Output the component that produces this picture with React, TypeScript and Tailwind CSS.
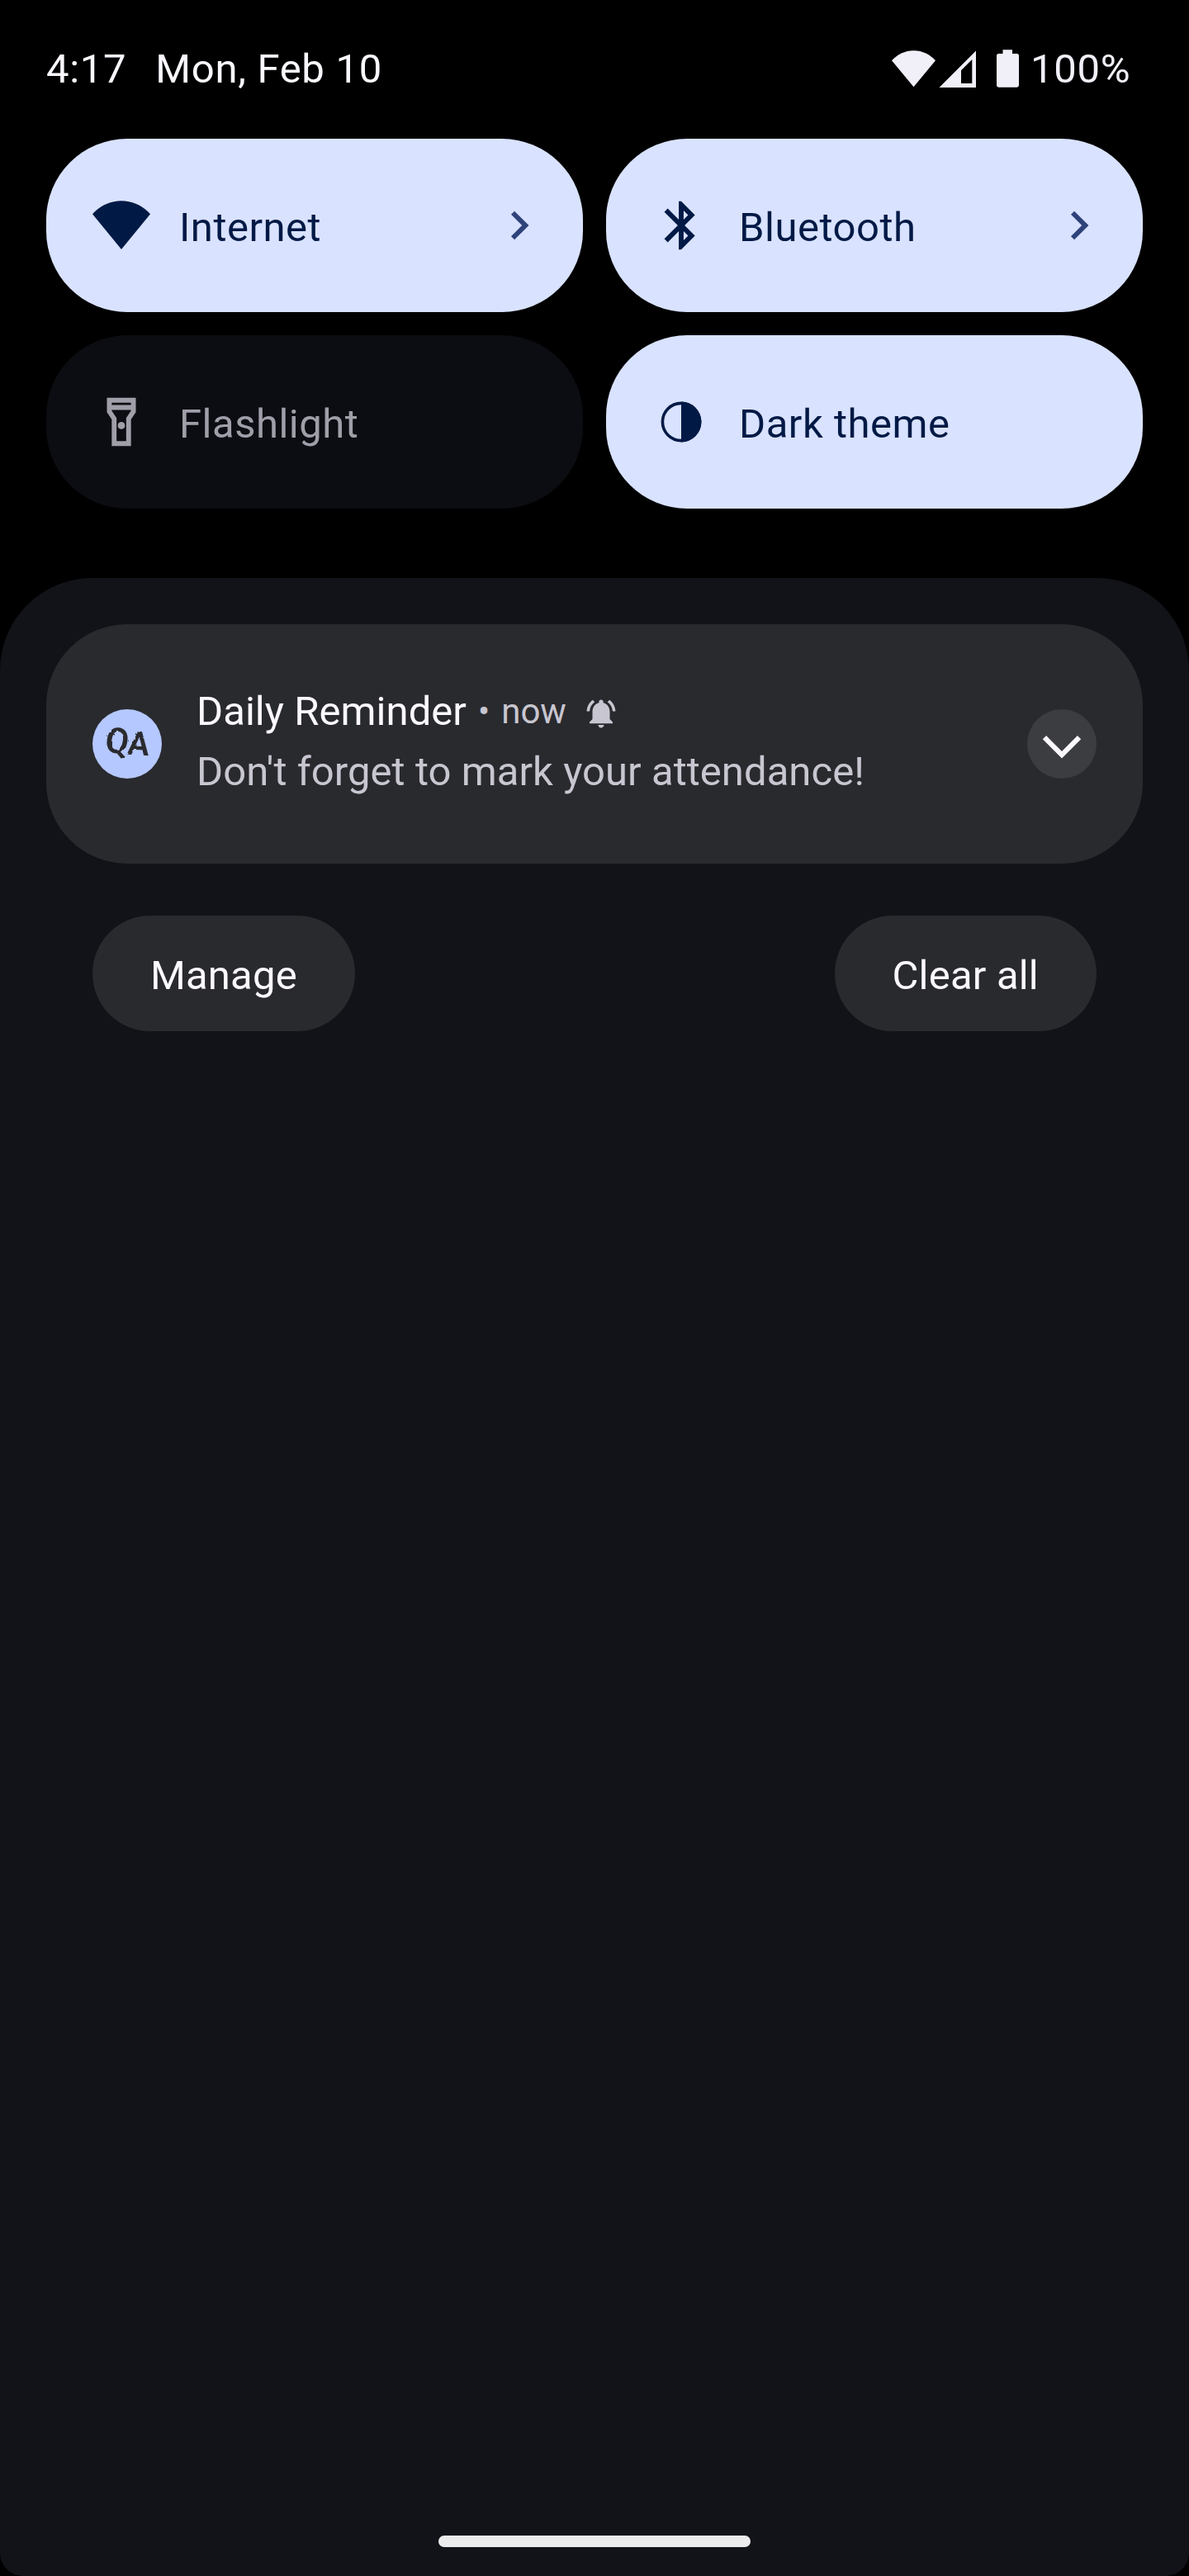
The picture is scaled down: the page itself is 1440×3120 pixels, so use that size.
import type { ReactNode } from "react";

type TileProps = {
  label: string;
  icon: ReactNode;
  active?: boolean;
  expandable?: boolean;
};

function WifiStatusIcon() {
  return (
    <svg className="mt-[5px] h-[46px] w-[53px]" viewBox="0 0 53 46" fill="currentColor">
      <path d="M26.5 45.3 0 13.3C6.5 6 16 1.2 26.5 1.2S46.500 6 53 13.300z" />
    </svg>
  );
}

function SignalStatusIcon() {
  return (
    <svg className="mt-[5px] ml-1 h-[46px] w-[46px]" viewBox="0 0 46 46" fill="currentColor" fillRule="evenodd">
      <path d="M.5 46 45 1.500V46zM27 25.300V41h13.300V12z" />
    </svg>
  );
}

function BatteryStatusIcon() {
  return (
    <svg className="mt-[5px] ml-6 h-[46px] w-[27px]" viewBox="0 0 27 46" fill="currentColor">
      <path d="M7.500.300h11.500v4.700H24.500A2.500 2.500 0 0 1 27 7.500V43.300A2.500 2.500 0 0 1 24.500 45.700H2.500A2.500 2.500 0 0 1 0 43.300V7.500A2.500 2.500 0 0 1 2.500 5h5z" />
    </svg>
  );
}

function InternetIcon() {
  return (
    <svg className="size-[70px]" viewBox="0 0 70 70" fill="currentColor">
      <path d="M35 64 0 21.300C8.500 11.500 21 5.300 35 5.300s26.500 6.200 35 16z" />
    </svg>
  );
}

function BluetoothIcon() {
  return (
    <svg className="size-[70px]" viewBox="0 0 24 24" fill="currentColor">
      <path d="M17.71 7.71 12 2h-1v7.590L6.410 5 5 6.410 10.590 12 5 17.590 6.410 19 11 14.410V22h1l5.710-5.710-4.300-4.290 4.300-4.290zM13 5.830l1.880 1.880L13 9.590V5.830zm1.880 10.460L13 18.170v-3.760l1.880 1.880z" />
    </svg>
  );
}

function FlashlightIcon() {
  return (
    <svg className="size-[70px]" viewBox="0 0 24 24" fill="currentColor">
      <path d="M18 2H6v6l2 3v11h8V11l2-3V2zm-2 2v1H8V4h8zm-2 6.400V20h-4v-9.600L8 7.400V7h8v.400l-2 3z" />
      <circle cx="12" cy="13.500" r="1.500" />
    </svg>
  );
}

function DarkThemeIcon() {
  return (
    <svg className="size-[70px]" viewBox="0 0 70 70">
      <circle cx="35" cy="35" r="22.600" fill="none" stroke="currentColor" strokeWidth="3.600" />
      <path d="M35 10.600a24.400 24.400 0 0 1 0 48.800z" fill="currentColor" />
    </svg>
  );
}

function ChevronRight() {
  return (
    <svg className="mr-[65px] h-[36px] w-[22px] text-[#2e437a]" viewBox="0 0 22 36" fill="currentColor">
      <path d="M4.100.700 0 4.800 13.200 18 0 31.200l4.100 4.100L21.500 18z" />
    </svg>
  );
}

function BellIcon() {
  return (
    <svg className="mt-2.5 ml-[21px] size-[42px] self-start" viewBox="0 0 24 24" fill="currentColor">
      <path d="M7.580 4.080 6.150 2.650C3.750 4.480 2.170 7.300 2.030 10.500h2c.150-2.650 1.510-4.970 3.550-6.420zm12.390 6.420h2c-.150-3.200-1.730-6.020-4.120-7.850l-1.420 1.430c2.020 1.450 3.390 3.770 3.540 6.420zM18 11c0-3.070-1.640-5.640-4.500-6.320V4c0-.830-.670-1.500-1.500-1.500s-1.500.670-1.500 1.500v.680C7.630 5.360 6 7.920 6 11v5l-2 2v1h16v-1l-2-2v-5zm-6 11c.140 0 .270-.010.400-.040.650-.140 1.180-.580 1.440-1.180.100-.240.150-.500.150-.780h-4c.010 1.100.900 2 2.010 2z" />
    </svg>
  );
}

function AppBadge() {
  return (
    <svg className="size-[84px] rounded-full bg-[#b5c8ff]" viewBox="0 0 84 84" fill="#292a2e" fontFamily="Roboto, sans-serif" fontWeight="600">
      <filter id="brush">
        <feTurbulence type="fractalNoise" baseFrequency="0.15" numOctaves="2" seed="4" result="noise" />
        <feDisplacementMap in="SourceGraphic" in2="noise" scale="3" />
      </filter>
      <g filter="url(#brush)" textAnchor="middle">
        <text transform="translate(27.500 53) rotate(10) scale(1 1.050)" fontSize="41">Q</text>
        <text transform="translate(54.500 55.500) rotate(3) skewX(-3)" fontSize="40">A</text>
      </g>
    </svg>
  );
}

function Tile({ label, icon, active = false, expandable = false }: TileProps) {
  return (
    <button
      className={
        "flex h-[210px] items-center rounded-[98px] pl-14 text-left " +
        (active ? "bg-[#d9e2ff] text-[#001945]" : "bg-[#0c0d12] text-[#a09fa9]")
      }
    >
      {icon}
      <span className="mt-[5px] ml-[35px] flex-1 leading-[57px] tracking-[0.5px]">{label}</span>
      {expandable && <ChevronRight />}
    </button>
  );
}

function StatusBar() {
  return (
    <header className="flex h-[168px] items-start pt-[55px] pr-[70px] pl-14 leading-[57px] tracking-[0.7px] text-[#fbf8ff]">
      <span>4:17</span>
      <span className="ml-[35px]">Mon, Feb 10</span>
      <div className="ml-auto flex items-start text-[#f1eff7]">
        <WifiStatusIcon />
        <SignalStatusIcon />
        <BatteryStatusIcon />
        <span className="ml-3.5 w-[122px]">100%</span>
      </div>
    </header>
  );
}

function Notification() {
  return (
    <article className="flex h-[290px] items-center rounded-[98px] bg-[#292a2e] px-14">
      <AppBadge />
      <div className="mb-1.5 ml-[42px] flex-1">
        <div className="flex items-baseline leading-[57px]">
          <h2 className="tracking-[0.050px] text-[#fbf8ff]">Daily Reminder</h2>
          <div className="flex items-baseline self-stretch text-[#c8c6d0]">
            <span className="ml-3.5 text-[42px]">•</span>
            <span className="ml-3.5 text-[42px]">now</span>
            <BellIcon />
          </div>
        </div>
        <p className="mt-4 leading-[57px] tracking-[0.050px] text-[#c8c6d0]">
          Don't forget to mark your attendance!
        </p>
      </div>
      <button className="size-[84px] rounded-full bg-[#3c3d41] text-[#fbf8ff]" aria-label="Expand">
        <svg className="size-full" viewBox="0 0 84 84" fill="currentColor">
          <path d="M18.800 36.300 23.100 32 42 51l18.900-19 4.300 4.300L42 59.500z" />
        </svg>
      </button>
    </article>
  );
}

function FooterButton({ children }: { children: ReactNode }) {
  return (
    <button className="flex h-[140px] items-center rounded-full bg-[#292a2e] px-[70px] pt-[5px] leading-[57px] tracking-[0.200px] text-[#fbf8ff]">
      {children}
    </button>
  );
}

export default function App() {
  return (
    <div className="flex h-[3120px] w-[1440px] flex-col bg-black font-[Roboto,sans-serif] text-[49px]">
      <StatusBar />
      <section className="grid grid-cols-2 gap-7 px-14">
        <Tile label="Internet" icon={<InternetIcon />} active expandable />
        <Tile label="Bluetooth" icon={<BluetoothIcon />} active expandable />
        <Tile label="Flashlight" icon={<FlashlightIcon />} />
        <Tile label="Dark theme" icon={<DarkThemeIcon />} active />
      </section>
      <main className="mt-[84px] flex flex-1 flex-col rounded-t-[112px] rounded-b-[28px] bg-[#121318] px-14 pt-14">
        <Notification />
        <div className="mt-[63px] flex justify-between px-14">
          <FooterButton>Manage</FooterButton>
          <FooterButton>Clear all</FooterButton>
        </div>
        <div className="mx-auto mt-auto mb-[35px] h-3.5 w-[378px] rounded-full bg-[#ececec]" />
      </main>
    </div>
  );
}
